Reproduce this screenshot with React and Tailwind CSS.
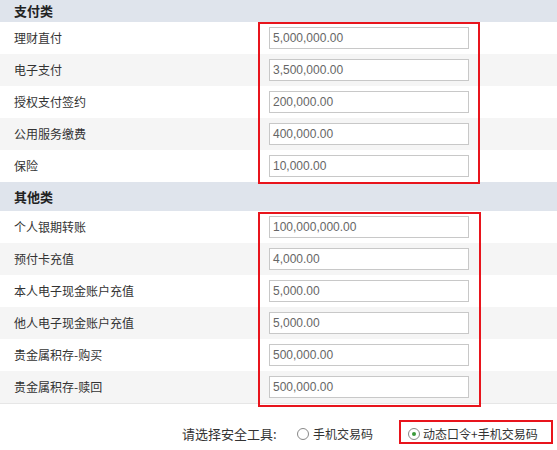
import React from "react";

const sec1 = [
  ["理财直付", "5,000,000.00"],
  ["电子支付", "3,500,000.00"],
  ["授权支付签约", "200,000.00"],
  ["公用服务缴费", "400,000.00"],
  ["保险", "10,000.00"],
];
const sec2 = [
  ["个人银期转账", "100,000,000.00"],
  ["预付卡充值", "4,000.00"],
  ["本人电子现金账户充值", "5,000.00"],
  ["他人电子现金账户充值", "5,000.00"],
  ["贵金属积存-购买", "500,000.00"],
  ["贵金属积存-赎回", "500,000.00"],
];

const font = { fontFamily: '"Noto Sans CJK SC", "Noto Sans", sans-serif' };

function Row({ label, value, odd }) {
  return (
    <div className={`flex h-[32px] items-center ${odd ? "bg-[#f5f5f5]" : "bg-white"}`}>
      <div className="w-[269px] pl-[14px] text-[12px] text-[#333]">{label}</div>
      <div className="flex h-[22px] w-[200px] items-center border border-[#c8c8c8] bg-white pl-[3px] text-[12px] text-[#666] [font-family:'Liberation_Sans',Arial,sans-serif]">
        {value}
      </div>
    </div>
  );
}

function Header({ title, h }) {
  return (
    <div className={`flex ${h} items-center bg-[#dfe4ec] pl-[14px] text-[13px] font-bold text-[#222]`}>
      {title}
    </div>
  );
}

export default function App() {
  return (
    <div className="relative h-[450px] w-[557px] overflow-hidden bg-white" style={font}>
      <Header title="支付类" h="h-[22px]" />
      {sec1.map((r, i) => (
        <Row key={r[0]} label={r[0]} value={r[1]} odd={i % 2 === 1} />
      ))}
      <Header title="其他类" h="h-[29px]" />
      {sec2.map((r, i) => (
        <Row key={r[0]} label={r[0]} value={r[1]} odd={i % 2 === 1} />
      ))}
      <div className="relative h-[47px] border-t border-[#e6e6e6] bg-white">
        <div className="flex h-[16px] items-center pl-[182px] pt-0 mt-[22px] text-[#333]">
          <span className="w-[115px] text-[13px]">请选择安全工具:</span>
          <span className="h-[12px] w-[12px] rounded-full border border-[#888] bg-white" />
          <span className="ml-[4px] w-[95px] text-[12px]">手机交易码</span>
          <span className="flex h-[12px] w-[12px] items-center justify-center rounded-full border border-[#888] bg-white">
            <span className="h-[4px] w-[4px] rounded-full bg-[#3a9a3a]" />
          </span>
          <span className="ml-[3px] text-[12px]">动态口令+手机交易码</span>
        </div>
        <div className="absolute left-[399px] top-[16px] h-[24px] w-[154px] border-2 border-[#e8141c]" />
      </div>
      <div className="absolute left-[258px] top-[22px] h-[162px] w-[222px] border-2 border-[#e8141c]" />
      <div className="absolute left-[258px] top-[212px] h-[195px] w-[223px] border-2 border-[#e8141c]" />
    </div>
  );
}
